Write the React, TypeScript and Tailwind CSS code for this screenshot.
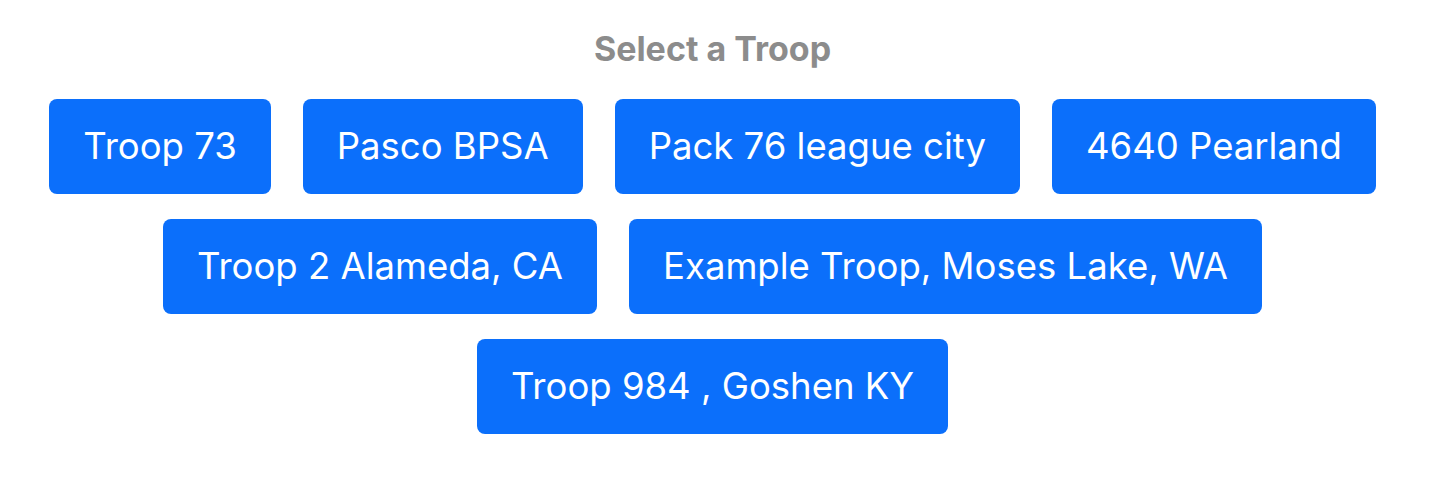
import React from "react";

const troops = [
  "Troop 73",
  "Pasco BPSA",
  "Pack 76 league city",
  "4640 Pearland",
  "Troop 2 Alameda, CA",
  "Example Troop, Moses Lake, WA",
  "Troop 984 , Goshen KY",
];

export default function App() {
  return (
    <div
      className="w-full min-h-[496px] bg-white pr-[7px]"
      style={{ fontFamily: "Inter, 'Liberation Sans', sans-serif" }}
    >
      <h1 className="pt-[29px] text-center text-[34px] leading-[40px] font-bold text-[#8c8c8c]">
        Select a Troop
      </h1>
      <div className="mt-[30px] flex flex-wrap justify-center gap-x-[32px] gap-y-[25px] px-[40px]">
        {troops.map((t) => (
          <button
            key={t}
            className="h-[95px] rounded-[8px] bg-[#0b6ffb] px-[34px] text-[36.5px] text-white"
          >
            {t}
          </button>
        ))}
      </div>
    </div>
  );
}
